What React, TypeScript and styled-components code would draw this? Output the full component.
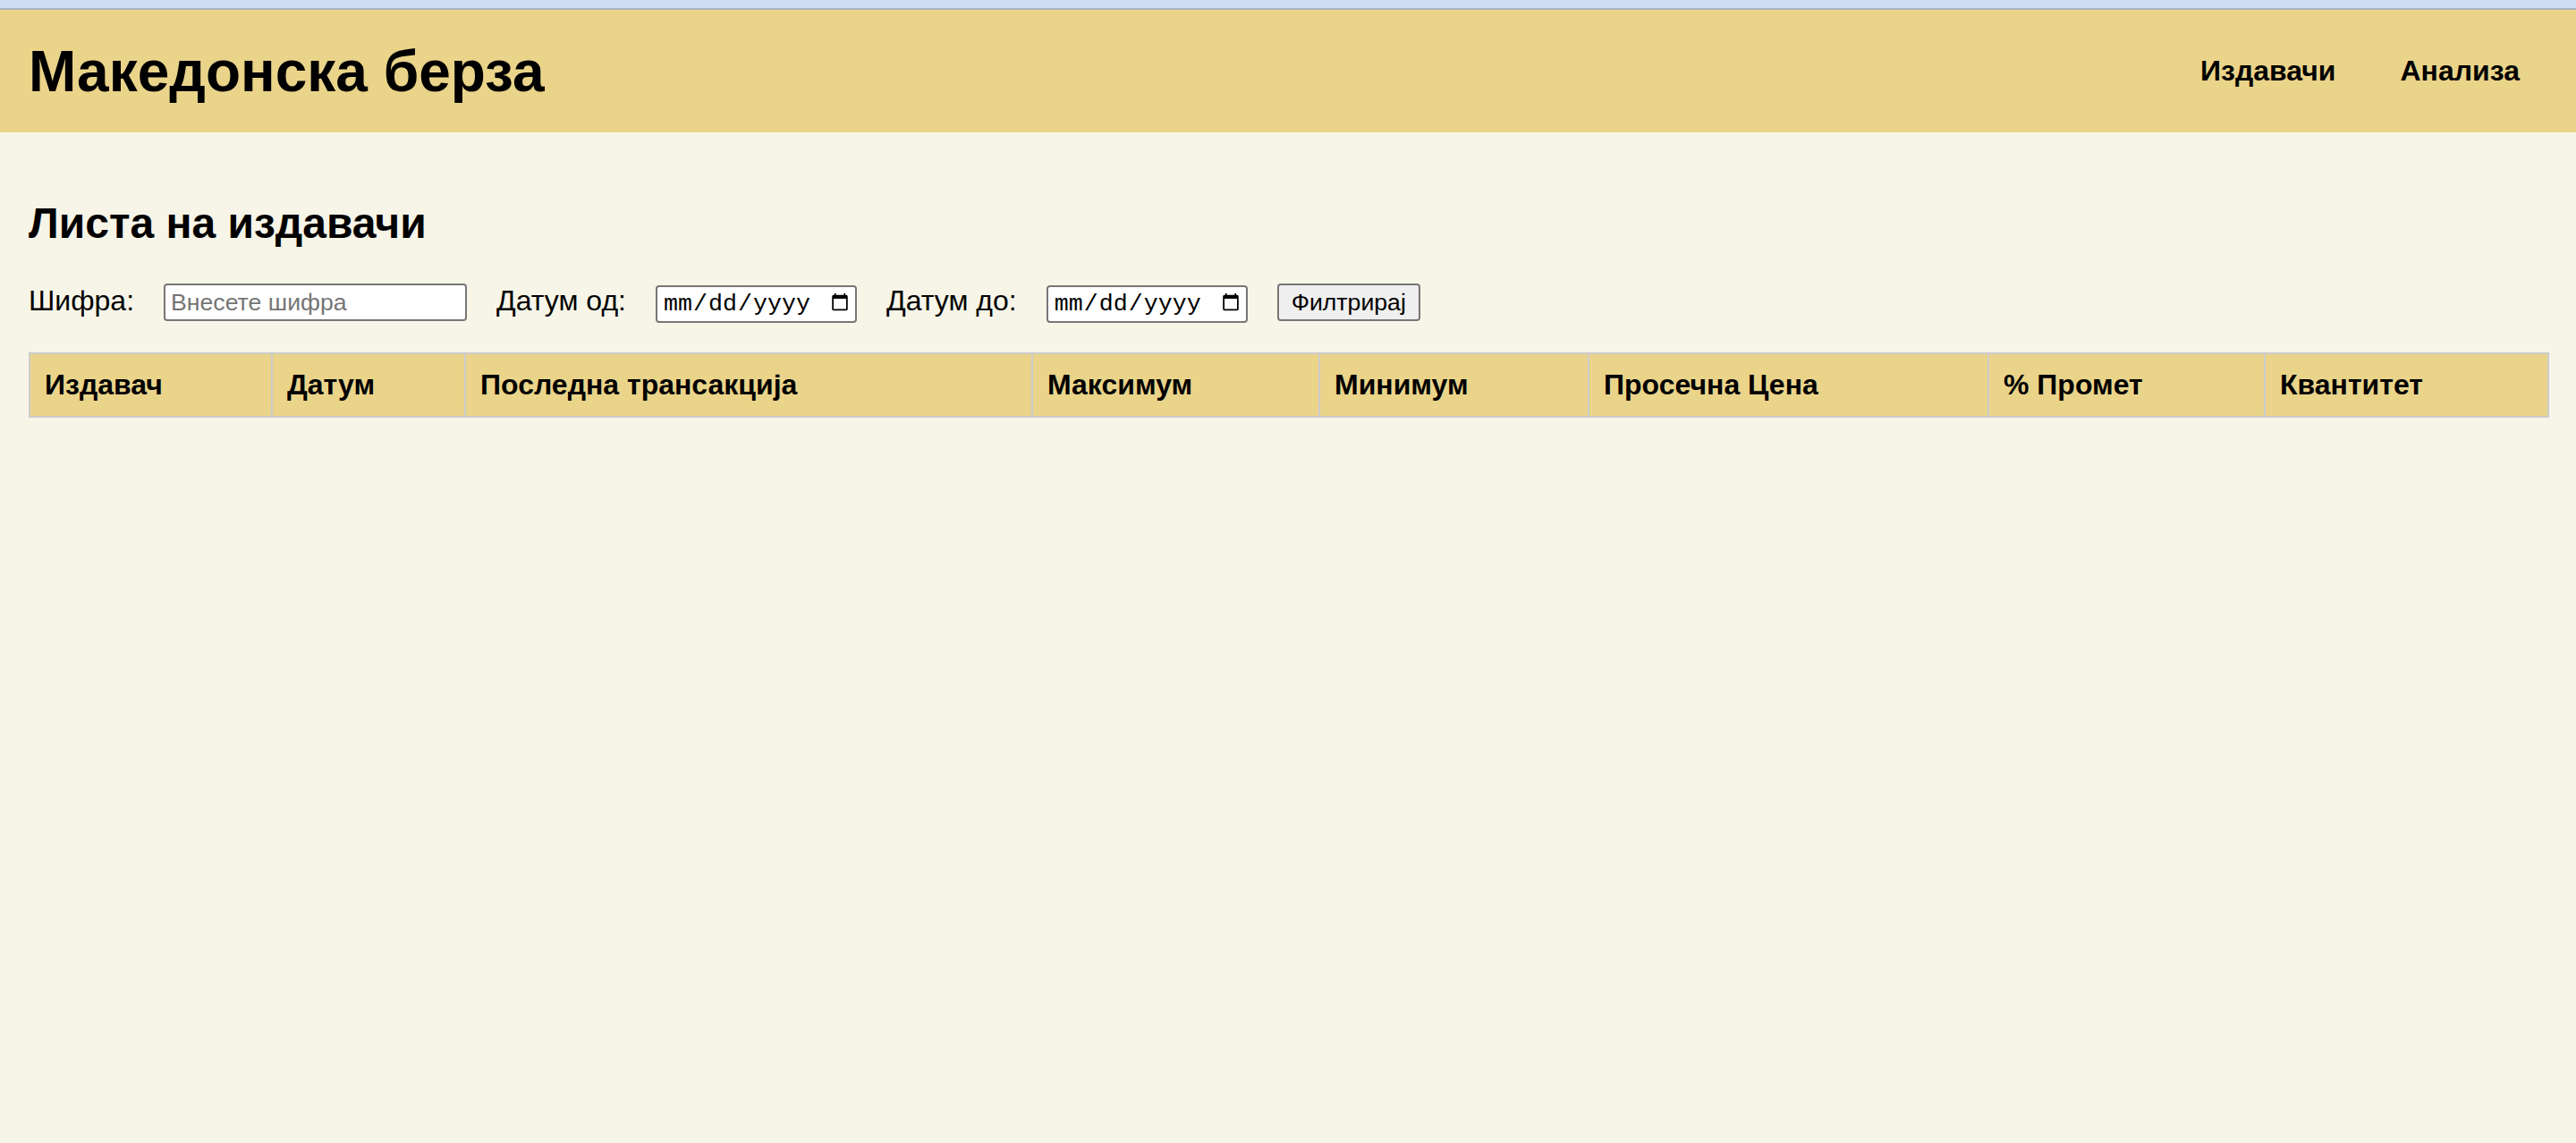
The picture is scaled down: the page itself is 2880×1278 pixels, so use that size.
import React from "react";
import styled, { createGlobalStyle } from "styled-components";

const GlobalStyle = createGlobalStyle`
  html, body {
    margin: 0;
    padding: 0;
    background: #f7f5e8;
    font-family: "Liberation Sans", Arial, sans-serif;
    font-size: 32px;
    color: #000;
  }
  * { box-sizing: border-box; }
`;

const BrowserStrip = styled.div`
  height: 11px;
  background: #cfdcf4;
  border-bottom: 2px solid #aab4c6;
`;

const Header = styled.header`
  height: 137px;
  background: #ead48a;
  display: flex;
  align-items: center;
  justify-content: space-between;
  padding: 0 63px 0 32px;
`;

const Brand = styled.h1`
  margin: 0;
  font-size: 64px;
  font-weight: 700;
`;

const Nav = styled.nav`
  display: flex;
  gap: 72px;
`;

const NavLink = styled.a`
  font-size: 32px;
  font-weight: 700;
  color: #000;
  text-decoration: none;
  cursor: pointer;
`;

const Main = styled.main`
  padding: 0 32px;
`;

const PageTitle = styled.h2`
  margin: 74px 0 40px;
  font-size: 48px;
  font-weight: 700;
`;

const FilterRow = styled.div`
  display: flex;
  align-items: baseline;
  gap: 33px;
`;

const Label = styled.label`
  font-size: 32px;
`;

const TextInput = styled.input`
  width: 339px;
  height: 42px;
  border: 2px solid #767676;
  border-radius: 4px;
  padding: 2px 6px;
  background: #fff;
  font-family: "Liberation Sans", Arial, sans-serif;
  font-size: 26.67px;
  &::placeholder { color: #757575; }
`;

const DateInput = styled.input`
  width: 225px;
  height: 42px;
  border: 2px solid #767676;
  border-radius: 4px;
  padding: 2px 4px 2px 6px;
  background: #fff;
  font-family: "Liberation Mono", monospace;
  font-size: 26.67px;
  &::-webkit-calendar-picker-indicator {
    width: 22px;
    height: 26px;
    margin-left: 4px;
  }
`;

const Button = styled.button`
  height: 42px;
  padding: 2px 14px;
  border: 2px solid #767676;
  border-radius: 4px;
  background: #efefef;
  font-family: "Liberation Sans", Arial, sans-serif;
  font-size: 26.67px;
  color: #000;
`;

const Table = styled.table`
  margin-top: 33px;
  width: 100%;
  table-layout: fixed;
  border-collapse: collapse;
`;

const HeadCell = styled.th`
  background: #ead48a;
  border: 2px solid #cccccc;
  padding: 16px;
  text-align: left;
  font-size: 32px;
  font-weight: 700;
  white-space: nowrap;
`;

const columns: { title: string; width: number }[] = [
  { title: "Издавач", width: 271 },
  { title: "Датум", width: 216 },
  { title: "Последна трансакција", width: 634 },
  { title: "Максимум", width: 321 },
  { title: "Минимум", width: 301 },
  { title: "Просечна Цена", width: 447 },
  { title: "% Промет", width: 309 },
  { title: "Квантитет", width: 317 },
];

export default function App() {
  return (
    <>
      <GlobalStyle />
      <BrowserStrip />
      <Header>
        <Brand>Македонска берза</Brand>
        <Nav>
          <NavLink>Издавачи</NavLink>
          <NavLink>Анализа</NavLink>
        </Nav>
      </Header>
      <Main>
        <PageTitle>Листа на издавачи</PageTitle>
        <FilterRow>
          <Label htmlFor="code">Шифра:</Label>
          <TextInput id="code" type="text" placeholder="Внесете шифра" />
          <Label htmlFor="from">Датум од:</Label>
          <DateInput id="from" type="date" />
          <Label htmlFor="to">Датум до:</Label>
          <DateInput id="to" type="date" />
          <Button type="button">Филтрирај</Button>
        </FilterRow>
        <Table>
          <colgroup>
            {columns.map((c) => (
              <col key={c.title} style={{ width: c.width }} />
            ))}
          </colgroup>
          <thead>
            <tr>
              {columns.map((c) => (
                <HeadCell key={c.title}>{c.title}</HeadCell>
              ))}
            </tr>
          </thead>
          <tbody />
        </Table>
      </Main>
    </>
  );
}
